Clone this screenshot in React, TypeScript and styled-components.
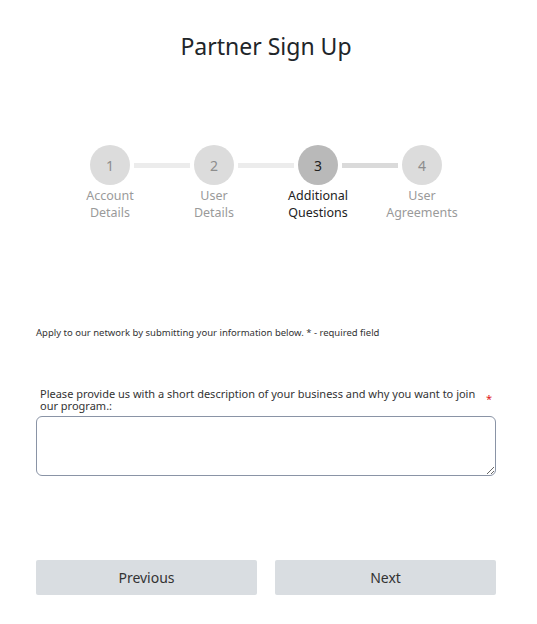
import React from 'react';
import styled, { createGlobalStyle } from 'styled-components';

const GlobalStyle = createGlobalStyle`
  body {
    margin: 0;
    background: #ffffff;
    font-family: 'Noto Sans', 'Open Sans', sans-serif;
    color: #212529;
  }
`;

const steps = [
  { no: 1, label: ['Account', 'Details'] },
  { no: 2, label: ['User', 'Details'] },
  { no: 3, label: ['Additional', 'Questions'] },
  { no: 4, label: ['User', 'Agreements'] },
];
const current = 3;

export default function App(): React.ReactElement {
  return (
    <>
      <GlobalStyle />
      <Page>
        <Title>Partner Sign Up</Title>
        <Stepper>
          <CircleRow>
            {steps.map((s, i) => (
              <React.Fragment key={s.no}>
                {i > 0 && <Connector $done={s.no > current} />}
                <Circle $active={s.no === current}>{s.no}</Circle>
              </React.Fragment>
            ))}
          </CircleRow>
          <LabelRow>
            {steps.map(s => (
              <StepLabel key={s.no} $active={s.no === current}>
                {s.label[0]}
                <br />
                {s.label[1]}
              </StepLabel>
            ))}
          </LabelRow>
        </Stepper>
        <Intro>Apply to our network by submitting your information below. * - required field</Intro>
        <Field>
          <LabelLine>
            <FieldLabel>
              Please provide us with a short description of your business and why you want to join
              our program.:
            </FieldLabel>
            <Required>*</Required>
          </LabelLine>
          <TextArea />
        </Field>
        <Buttons>
          <NavButton>Previous</NavButton>
          <NavButton>Next</NavButton>
        </Buttons>
      </Page>
    </>
  );
}

const Page = styled.div`
  width: 460px;
  margin-left: 36px;
  padding-top: 30px;
  display: flex;
  flex-direction: column;
`;

const Title = styled.h1`
  margin: 0;
  font-size: 23px;
  font-weight: 400;
  line-height: 32px;
  text-align: center;
  color: #212529;
`;

const Stepper = styled.div`
  margin-top: 83px;
  display: flex;
  flex-direction: column;
  align-items: center;
`;

const CircleRow = styled.div`
  display: flex;
  align-items: center;
`;

const Circle = styled.div<{ $active: boolean }>`
  width: 40px;
  height: 40px;
  border-radius: 50%;
  background: ${p => (p.$active ? '#b9b9b9' : '#dcdcdc')};
  color: ${p => (p.$active ? '#222' : '#8d8d8d')};
  display: flex;
  align-items: center;
  justify-content: center;
  font-size: 14px;
`;

const Connector = styled.div<{ $done: boolean }>`
  width: 56px;
  height: 5px;
  margin: 0 4px;
  background: ${p => (p.$done ? '#dadada' : '#ececec')};
`;

const LabelRow = styled.div`
  display: grid;
  grid-template-columns: repeat(4, 104px);
  margin-top: 2px;
`;

const StepLabel = styled.div<{ $active: boolean }>`
  text-align: center;
  font-size: 12.5px;
  line-height: 17px;
  color: ${p => (p.$active ? '#222' : '#9a9a9a')};
`;

const Intro = styled.p`
  margin: 106px 0 0;
  font-size: 9.5px;
  line-height: 12px;
  color: #333;
`;

const Field = styled.div`
  margin-top: 49px;
  display: flex;
  flex-direction: column;
`;

const LabelLine = styled.div`
  display: flex;
  align-items: flex-start;
  padding-left: 4px;
`;

const FieldLabel = styled.label`
  flex: 1;
  font-size: 11px;
  line-height: 12px;
  color: #333;
`;

const Required = styled.span`
  width: 10px;
  margin: 3px 0 0 9px;
  color: #e02020;
  font-size: 11px;
`;

const TextArea = styled.textarea`
  margin-top: 4px;
  height: 60px;
  box-sizing: border-box;
  border: 1px solid #8a94a6;
  border-radius: 6px;
  font-family: inherit;
`;

const Buttons = styled.div`
  margin-top: 84px;
  display: grid;
  grid-template-columns: 1fr 1fr;
  gap: 18px;
`;

const NavButton = styled.button`
  height: 35px;
  border: none;
  border-radius: 2px;
  background: #d9dde1;
  color: #333;
  font-family: inherit;
  font-size: 14px;
`;
